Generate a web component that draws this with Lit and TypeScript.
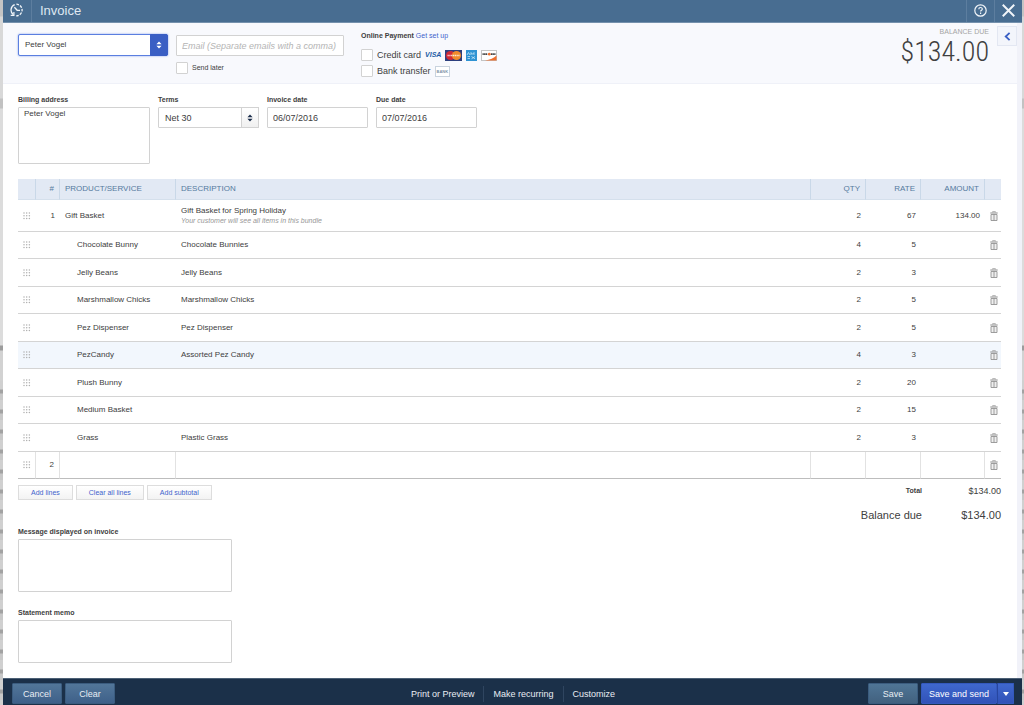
import { LitElement, html, svg, css, nothing } from "lit";
import { customElement, state } from "lit/decorators.js";

interface Line {
  num?: string;
  product: string;
  description?: string;
  note?: string;
  qty: string;
  rate: string;
  amount?: string;
  child?: boolean;
}

const LINES: Line[] = [
  {
    num: "1",
    product: "Gift Basket",
    description: "Gift Basket for Spring Holiday",
    note: "Your customer will see all items in this bundle",
    qty: "2",
    rate: "67",
    amount: "134.00",
  },
  { product: "Chocolate Bunny", description: "Chocolate Bunnies", qty: "4", rate: "5", child: true },
  { product: "Jelly Beans", description: "Jelly Beans", qty: "2", rate: "3", child: true },
  { product: "Marshmallow Chicks", description: "Marshmallow Chicks", qty: "2", rate: "5", child: true },
  { product: "Pez Dispenser", description: "Pez Dispenser", qty: "2", rate: "5", child: true },
  { product: "PezCandy", description: "Assorted Pez Candy", qty: "4", rate: "3", child: true },
  { product: "Plush Bunny", qty: "2", rate: "20", child: true },
  { product: "Medium Basket", qty: "2", rate: "15", child: true },
  { product: "Grass", description: "Plastic Grass", qty: "2", rate: "3", child: true },
];

const gripIcon = html`<svg class="grip" width="8" height="8" viewBox="0 0 8 8" aria-hidden="true">
  ${[1, 3.7, 6.4].map((y) => [1, 3.7, 6.4].map((x) => svg`<circle cx=${x} cy=${y} r="0.75" fill="#b0b0b0" />`))}
</svg>`;

const trashIcon = html`<svg width="8" height="10" viewBox="0 0 8 10" aria-hidden="true">
  <path d="M2.6 1.3V.6h2.8v.7" fill="none" stroke="#a0a0a0" stroke-width=".8" />
  <path d="M.3 2h7.4" stroke="#8c8c8c" stroke-width="1" />
  <path d="M1 3.500h6v6H1z" fill="#efefef" stroke="#939393" stroke-width=".9" />
  <path d="M4 3.400v6" stroke="#939393" stroke-width=".9" />
</svg>`;

const updown = html`<svg width="6" height="8" viewBox="0 0 6 8" aria-hidden="true">
  <path d="M3 .4 5.6 3.3H.4zM3 7.6.4 4.7h5.2z" fill="currentColor" />
</svg>`;

@customElement("app-root")
export class AppRoot extends LitElement {
  @state() private selected = 5;

  static styles = css`
    :host {
      display: block;
      font-family: "Liberation Sans", Arial, sans-serif;
      font-size: 8px;
      line-height: 10px;
      color: #404040;
    }
    *,
    *::before,
    *::after {
      box-sizing: border-box;
    }
    button,
    input,
    select,
    textarea {
      font: inherit;
      color: inherit;
      margin: 0;
      border-radius: 0;
    }
    button {
      cursor: pointer;
      padding: 0;
      border: 0;
      background: none;
      display: flex;
      align-items: center;
      justify-content: center;
      white-space: nowrap;
    }
    svg {
      display: block;
    }
    a {
      text-decoration: none;
      color: #3f63cc;
    }
    .backdrop {
      min-height: 100vh;
      padding: 0 2px 0 3px;
      display: flex;
      background: linear-gradient(#c4c4c4 0 16px, #d8d8d8 17px 98px, #c2c2c2 99px 108px, #dcdcdc 109px 345px, #9c9c9c 346px 350px, #d2d2d2 351px 380px, transparent 381px),
        repeating-linear-gradient(#d0d0d0 0 9px, #a2a2a2 10px 13px, #c8c8c8 14px 20px);
    }
    .panel {
      flex: 1;
      min-width: 0;
      display: flex;
      flex-direction: column;
      background: #fff;
    }

    .topbar {
      display: flex;
      align-items: stretch;
      height: 23px;
      flex: none;
      background: #486d91;
      border-bottom: 1px solid #7591ad;
      color: #dfe8f1;
    }
    .topbar h1 {
      flex: 1;
      margin: 0;
      padding-left: 8px;
      font-size: 13px;
      font-weight: 400;
      line-height: 21px;
    }
    .history,
    .help,
    .close {
      flex: none;
      width: 29px;
      color: #f1f5f9;
      padding-bottom: 2px;
    }
    .history {
      border-right: 1px solid #5d7e9f;
    }
    .help,
    .close {
      width: 28px;
      border-left: 1px solid #5d7e9f;
    }

    .body {
      flex: 1;
      display: flex;
      flex-direction: column;
      border-right: 5px solid #f1f2f9;
    }
    .hero {
      display: flex;
      align-items: flex-start;
      background: #f8f9fd;
      border-bottom: 1px solid #eff1f8;
      height: 61px;
      padding-left: 15px;
    }
    .picker {
      display: grid;
    }
    .picker > * {
      grid-area: 1 / 1;
    }
    .picker select {
      appearance: none;
      width: 100%;
      height: 21px;
      padding: 0 18px 0 6px;
      border: 1px solid #d2d2d2;
      border-radius: 1px;
      background: #fff;
      outline: none;
    }
    .arrows {
      justify-self: end;
      pointer-events: none;
      width: 18px;
      display: grid;
      place-items: center;
      border: 1px solid #d2d2d2;
      background: linear-gradient(#fff, #f0f0f0);
      color: #1c2f4c;
    }
    .picker.focus {
      width: 150px;
      margin: 11px 8px 0 0;
    }
    .picker.focus select {
      height: 22px;
      border: 1px solid #5b7fe0;
      box-shadow: 0 0 2px #7b98ea;
      border-radius: 2px;
    }
    .picker.focus .arrows {
      border-color: #3a5fc4;
      background: #3a5fc4;
      color: #fff;
      border-radius: 0 2px 2px 0;
    }
    .field {
      height: 21px;
      border: 1px solid #d2d2d2;
      border-radius: 1px;
      padding: 0 5px;
      background: #fff;
      outline: none;
    }
    .field,
    .terms select {
      font-size: 9px;
    }
    .email {
      width: 168px;
      margin-right: 17px;
      padding-top: 12px;
    }
    .email .field {
      display: block;
      width: 100%;
    }
    .field::placeholder {
      font-style: italic;
      color: #b4b4b4;
      opacity: 1;
    }
    .check {
      display: flex;
      align-items: center;
      gap: 4px;
    }
    .check input {
      appearance: none;
      width: 12px;
      height: 12px;
      border: 1px solid #d2d2d2;
      border-radius: 1px;
      background: #fff;
    }
    .check input:checked {
      background: #3a5fc4;
    }
    .email .check {
      margin-top: 6px;
      font-size: 7px;
    }
    .payment {
      flex: 1;
      padding-top: 8px;
      font-size: 7px;
    }
    .payment .check {
      font-size: 9px;
      height: 16px;
    }
    .payment .check:first-of-type {
      margin-top: 6px;
    }
    .payment .check svg {
      flex: none;
    }
    .visa {
      color: #1c5da6;
      font-size: 7px;
      font-weight: 700;
      font-style: italic;
    }
    .bank {
      border: 1px solid #c9d3de;
      color: #8296ab;
      font-size: 4px;
      font-weight: 700;
      line-height: 9px;
      padding: 0 1px;
      background: #fff;
    }
    .due {
      text-align: right;
      padding-top: 4px;
      margin-right: 8px;
      font-size: 7px;
      color: #a5a5a5;
    }
    .due strong {
      display: block;
      font-family: "Roboto Condensed", Roboto, "Liberation Sans", sans-serif;
      font-size: 28px;
      font-weight: 300;
      line-height: 30px;
      color: #404040;
    }
    .collapse {
      width: 20px;
      height: 20px;
      margin-top: 3px;
      border: 1px solid #e3e7f2;
      background: #f3f5fb;
      color: #3a5fc4;
    }

    .content {
      padding: 12px 16px 15px 15px;
      display: flex;
      flex-direction: column;
    }
    .label {
      display: block;
      font-size: 7px;
      font-weight: 700;
      line-height: 8px;
      margin-bottom: 3px;
    }
    .details {
      display: flex;
      align-items: flex-start;
      gap: 8px;
      margin-bottom: 15px;
    }
    textarea {
      display: block;
      border: 1px solid #d2d2d2;
      border-radius: 1px;
      padding: 1px 5px;
      resize: none;
      outline: none;
      background: #fff;
    }
    .billing textarea {
      width: 132px;
      height: 57px;
    }
    .terms,
    .date {
      width: 101px;
    }
    .date .field {
      width: 100%;
      display: block;
    }

    table {
      width: 100%;
      table-layout: fixed;
      border-collapse: separate;
      border-spacing: 0;
    }
    .c-grip { width: 18px; }
    .c-num { width: 24px; }
    .c-product { width: 116px; }
    .c-qty { width: 55px; }
    .c-amount { width: 64px; }
    .c-trash { width: 16px; }
    th {
      height: 21px;
      padding: 0 5px;
      background: #e2e9f4;
      border-bottom: 1px solid #d5e0ec;
      border-right: 1px solid #c9d8e8;
      font-weight: 400;
      color: #557a9e;
      text-align: left;
    }
    th:last-child {
      border-right: 0;
    }
    td {
      height: 27px;
      padding: 0 5px;
      border-bottom: 1px solid #d4d4d4;
    }
    tbody tr:nth-child(odd) td {
      height: 28px;
    }
    tbody tr.parent td {
      height: 32px;
    }
    td.tool {
      padding: 0 0 0 5px;
    }
    td.child {
      padding-left: 17px;
    }
    .right {
      text-align: right;
    }
    tr.selected td {
      background: #f2f7fd;
    }
    .note {
      font-size: 7px;
      font-style: italic;
      color: #979797;
    }
    tr.blank td {
      border-bottom: 1px solid #bdbdbd;
      border-right: 1px solid #e2e2e2;
    }
    tr.blank td:last-child {
      border-right: 0;
    }

    .below {
      display: flex;
      justify-content: space-between;
      align-items: flex-start;
      padding-top: 6px;
      margin-bottom: 6px;
    }
    .line-actions {
      display: flex;
      gap: 3px;
    }
    .line-actions button {
      height: 15px;
      padding: 0 12px;
      border: 1px solid #ddd;
      background: linear-gradient(#fff, #f3f3f3);
      color: #3f63cc;
      font-size: 7px;
    }
    .totals {
      display: grid;
      grid-template-columns: auto 79px;
      row-gap: 11px;
      margin: 0;
      text-align: right;
    }
    .totals dt,
    .totals dd {
      margin: 0;
      line-height: 12px;
    }
    .totals dt {
      font-size: 7px;
      font-weight: 700;
    }
    .totals dd {
      font-size: 9px;
    }
    .totals .big {
      font-size: 11px;
      font-weight: 400;
      line-height: 14px;
    }
    .memo {
      margin-bottom: 17px;
    }
    .memo textarea {
      width: 214px;
      height: 53px;
    }
    .memo:last-child {
      margin-bottom: 0;
    }
    .memo:last-child textarea {
      height: 43px;
    }

    .footer {
      flex: none;
      display: grid;
      grid-template-columns: 1fr auto 1fr;
      align-items: center;
      height: 27px;
      padding: 3px 8px 0 9px;
      border-top: 1px solid #4c6075;
      background: #1b3049;
      font-size: 9px;
      color: #e8edf3;
    }
    .group {
      display: flex;
      gap: 3px;
    }
    .group.end {
      justify-content: flex-end;
    }
    .btn {
      height: 21px;
      min-width: 50px;
      padding: 0 7px;
      border: 1px solid #3b5c7f;
      border-radius: 1px;
      background: linear-gradient(#527699, #3e6089);
      color: #e8edf3;
    }
    .save {
      background: linear-gradient(#4f7596, #42617f);
    }
    .split {
      display: flex;
    }
    .split .btn {
      border-color: #3459bd;
      background: linear-gradient(#3f68cd, #3152b8);
      color: #fff;
    }
    .split .btn + .btn {
      min-width: 17px;
      padding: 0;
      border-left-color: #2746a0;
    }
    .links button {
      height: 16px;
      padding: 0 9px;
      color: #e8edf3;
    }
    .links {
      gap: 0;
    }
    .links button + button {
      border-left: 1px solid #2f4560;
    }
  `;

  private removeButton(name: string) {
    return html`<button aria-label="Delete ${name}">${trashIcon}</button>`;
  }

  private row(line: Line, i: number) {
    return html`<tr
      class="${line.child ? "" : "parent"} ${i === this.selected ? "selected" : ""}"
      @click=${() => (this.selected = i)}
    >
      <td class="tool">${gripIcon}</td>
      <td class="right">${line.num ?? nothing}</td>
      <td class=${line.child ? "child" : ""}>${line.product}</td>
      <td>
        ${line.description ?? nothing}${line.note ? html`<div class="note">${line.note}</div>` : nothing}
      </td>
      <td class="right">${line.qty}</td>
      <td class="right">${line.rate}</td>
      <td class="right">${line.amount ?? nothing}</td>
      <td class="tool">${this.removeButton(line.product)}</td>
    </tr>`;
  }

  render() {
    return html`<div class="backdrop">
      <div class="panel">
        <header class="topbar">
          <button class="history" aria-label="Recent transactions">
            <svg width="14" height="14" viewBox="0 0 14 14" fill="none" stroke="currentColor">
              <path d="M3.2 11.6A5.8 5.8 0 0 1 4.7 1.7" stroke-width="1.3" />
              <path d="M6.4 1.2A5.8 5.8 0 1 1 6.2 12.8" stroke-width="1.3" stroke-dasharray="2.6 1.2" />
              <path d="M.7 12.3h3.2V9.1" stroke-width="1.2" />
              <path d="M4.4 4.3 7.2 7.3H10" stroke-width="1.3" />
            </svg>
          </button>
          <h1>Invoice</h1>
          <button class="help" aria-label="Help">
            <svg width="13" height="13" viewBox="0 0 13 13" fill="none" stroke="currentColor">
              <circle cx="6.5" cy="6.5" r="5.7" stroke-width="1.2" />
              <path d="M4.8 5.2c0-2.3 3.5-2.2 3.5-.2 0 1.3-1.7 1.3-1.7 2.6" stroke-width="1.2" />
              <path d="M6.6 8.6v1.3" stroke-width="1.2" />
            </svg>
          </button>
          <button class="close" aria-label="Close">
            <svg width="13" height="13" viewBox="0 0 12 12" stroke="currentColor" stroke-width="1.8">
              <path d="M.7.7l10.6 10.6M11.3.7.7 11.3" />
            </svg>
          </button>
        </header>

        <main class="body">
          <section class="hero">
            <div class="picker focus">
              <select aria-label="Customer"><option>Peter Vogel</option></select>
              <span class="arrows">${updown}</span>
            </div>
            <div class="email">
              <input class="field" type="email" aria-label="Email" placeholder="Email (Separate emails with a comma)" />
              <label class="check"><input type="checkbox" />Send later</label>
            </div>
            <div class="payment">
              <b>Online Payment</b> <a href="#setup">Get set up</a>
              <label class="check"
                ><input type="checkbox" />Credit card
                <span class="visa">VISA</span>
                <svg width="17" height="11" viewBox="0 0 17 11" role="img" aria-label="MasterCard">
                  <rect width="17" height="11" fill="#2c3f7e" />
                  <circle cx="5.500" cy="5.500" r="4.600" fill="#cf2a36" />
                  <circle cx="11.500" cy="5.500" r="4.600" fill="#f08a2c" />
                  <path d="M2.500 5.500h12" stroke="#fff" stroke-width="1.600" stroke-dasharray="1.300 .5" opacity=".8" />
                </svg>
                <svg width="11" height="11" viewBox="0 0 11 11" role="img" aria-label="American Express">
                  <rect width="11" height="11" fill="#2f93d3" />
                  <path d="M1 5 2.500 2.500 4 5M5 5V2.500l1.500 1.800L8 2.500V5M1.500 6.500H4M1.500 8.500H4M5.500 6.500 9 8.800M9 6.500 5.500 8.800" fill="none" stroke="#d8effb" stroke-width=".7" />
                </svg>
                <svg width="16" height="11" viewBox="0 0 16 11" role="img" aria-label="Discover">
                  <rect x=".5" y=".5" width="15" height="10" fill="#fff" stroke="#c4c4c4" />
                  <path d="M4 10.500C9 9.800 13 8 15.500 5.500v5z" fill="#ee6f2d" />
                  <path d="M1.500 4.200h5M10 4.200h4.500" stroke="#444" stroke-width="1.800" stroke-dasharray="1.300 .3" />
                  <circle cx="8.300" cy="4.200" r="1.400" fill="#ee6f2d" />
                </svg>
              </label>
              <label class="check"><input type="checkbox" />Bank transfer <span class="bank">BANK</span></label>
            </div>
            <div class="due">BALANCE DUE<strong>$134.00</strong></div>
            <button class="collapse" aria-label="Collapse">
              <svg width="7" height="9" viewBox="0 0 7 9" fill="none" stroke="currentColor" stroke-width="1.800">
                <path d="M5.600.8 1.700 4.500l3.900 3.700" />
              </svg>
            </button>
          </section>

          <section class="content">
            <div class="details">
              <div class="billing">
                <label class="label" for="billing">Billing address</label>
                <textarea id="billing" .value=${"Peter Vogel"}></textarea>
              </div>
              <div class="terms">
                <label class="label" for="terms">Terms</label>
                <div class="picker">
                  <select id="terms"><option>Net 30</option></select>
                  <span class="arrows">${updown}</span>
                </div>
              </div>
              <div class="date">
                <label class="label" for="invoice-date">Invoice date</label>
                <input class="field" id="invoice-date" value="06/07/2016" />
              </div>
              <div class="date">
                <label class="label" for="due-date">Due date</label>
                <input class="field" id="due-date" value="07/07/2016" />
              </div>
            </div>

            <table>
              <colgroup>
                <col class="c-grip" />
                <col class="c-num" />
                <col class="c-product" />
                <col />
                <col class="c-qty" />
                <col class="c-qty" />
                <col class="c-amount" />
                <col class="c-trash" />
              </colgroup>
              <thead>
                <tr>
                  <th></th>
                  <th class="right">#</th>
                  <th>PRODUCT/SERVICE</th>
                  <th>DESCRIPTION</th>
                  <th class="right">QTY</th>
                  <th class="right">RATE</th>
                  <th class="right">AMOUNT</th>
                  <th></th>
                </tr>
              </thead>
              <tbody>
                ${LINES.map((line, i) => this.row(line, i))}
                <tr class="blank">
                  <td class="tool">${gripIcon}</td>
                  <td class="right">2</td>
                  <td></td>
                  <td></td>
                  <td></td>
                  <td></td>
                  <td></td>
                  <td class="tool">${this.removeButton("line 2")}</td>
                </tr>
              </tbody>
            </table>

            <div class="below">
              <div class="line-actions">
                <button>Add lines</button>
                <button>Clear all lines</button>
                <button>Add subtotal</button>
              </div>
              <dl class="totals">
                <dt>Total</dt>
                <dd>$134.00</dd>
                <dt class="big">Balance due</dt>
                <dd class="big">$134.00</dd>
              </dl>
            </div>

            <div class="memo">
              <label class="label" for="message">Message displayed on invoice</label>
              <textarea id="message"></textarea>
            </div>
            <div class="memo">
              <label class="label" for="memo">Statement memo</label>
              <textarea id="memo"></textarea>
            </div>
          </section>
        </main>

        <footer class="footer">
          <div class="group">
            <button class="btn">Cancel</button>
            <button class="btn">Clear</button>
          </div>
          <div class="group links">
            <button>Print or Preview</button>
            <button>Make recurring</button>
            <button>Customize</button>
          </div>
          <div class="group end">
            <button class="btn save">Save</button>
            <div class="split">
              <button class="btn">Save and send</button>
              <button class="btn" aria-label="More save options">
                <svg width="6" height="4" viewBox="0 0 6 4"><path d="M0 0h6L3 4z" fill="currentColor" /></svg>
              </button>
            </div>
          </div>
        </footer>
      </div>
    </div>`;
  }
}
